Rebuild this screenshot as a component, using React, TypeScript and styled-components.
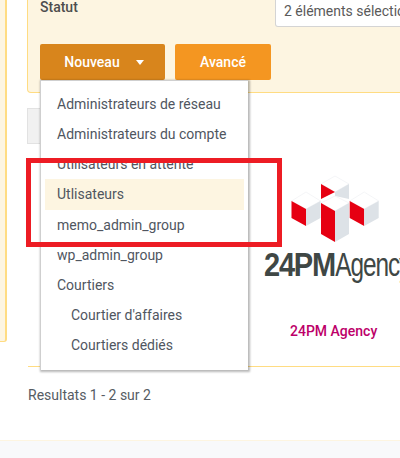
import styled, { createGlobalStyle } from "styled-components";

const GlobalStyle = createGlobalStyle`
  html, body {
    margin: 0;
    padding: 0;
    background: #ffffff;
  }
  body {
    font-family: Roboto, "Liberation Sans", sans-serif;
    color: #555b63;
  }
`;

const Page = styled.div`
  position: relative;
  width: 400px;
  height: 458px;
  overflow: hidden;
  display: grid;
  grid-template-columns: 7px 1fr;
  grid-template-rows: 440px 18px;
`;

const SideStrip = styled.div`
  height: 342px;
  box-sizing: border-box;
  background: #fdf5e1;
  border-right: 2px solid #ffdc82;
  border-bottom: 1px solid #ffdc82;
  border-bottom-right-radius: 3px;
`;

const Main = styled.main`
  padding-left: 20px;
  min-width: 0;
`;

const FilterPanel = styled.section`
  box-sizing: border-box;
  width: 400px;
  height: 93px;
  padding: 0 0 0 12px;
  background: #fdf5e1;
  border: 1px solid #ffdc82;
  border-top: none;
  border-bottom-left-radius: 4px;
`;

const FieldRow = styled.div`
  display: grid;
  grid-template-columns: 235px 1fr;
  height: 44px;
`;

const FieldLabel = styled.label`
  font-size: 14px;
  line-height: 14px;
  font-weight: 500;
  color: #4d4d4d;
`;

const SelectBox = styled.div`
  box-sizing: border-box;
  height: 27px;
  padding: 1px 0 0 8px;
  background: #ffffff;
  border: 1px solid #d4d4d4;
  border-top: none;
  border-radius: 0 0 3px 3px;
  font-size: 14px;
  line-height: 20px;
  white-space: nowrap;
  color: #5a5a5a;
`;

const Actions = styled.div`
  position: relative;
  display: flex;
  gap: 10px;
`;

const ActionButton = styled.button<{ $bg: string; $width: number; $shift?: number }>`
  display: flex;
  align-items: center;
  justify-content: center;
  gap: 16px;
  box-sizing: border-box;
  width: ${(p) => p.$width}px;
  height: 36px;
  padding: 0 0 0 ${(p) => p.$shift ?? 0}px;
  border: none;
  border-radius: 2px;
  background: ${(p) => p.$bg};
  color: #ffffff;
  font-family: inherit;
  font-size: 14px;
  font-weight: 500;
`;

const Caret = styled.span`
  width: 0;
  height: 0;
  border-left: 4.5px solid transparent;
  border-right: 4.5px solid transparent;
  border-top: 5px solid #ffffff;
`;

const Menu = styled.ul`
  position: absolute;
  top: 36px;
  left: 0;
  box-sizing: border-box;
  width: 208px;
  height: 290px;
  margin: 0;
  padding: 8px 4px;
  list-style: none;
  background: #ffffff;
  border: 1px solid #cfcfcf;
  border-right: none;
  border-bottom: none;
  box-shadow: 1px 1px 2px 1px rgba(0, 0, 0, 0.28);
`;

const MenuItem = styled.li<{ $active?: boolean; $nested?: boolean }>`
  height: 30.13px;
  padding-left: ${(p) => (p.$nested ? 26 : 12)}px;
  font-size: 14px;
  line-height: 30px;
  white-space: nowrap;
  color: #50565f;
  background: ${(p) => (p.$active ? "#fdf5e1" : "transparent")};
`;

const Gallery = styled.div`
  box-sizing: border-box;
  width: 372px;
  height: 274px;
  margin-left: 1px;
  display: flex;
  align-items: flex-start;
  border-bottom: 1px solid #ffdc82;
  padding-top: 15px;
`;

const GreyTile = styled.div`
  box-sizing: border-box;
  width: 60px;
  height: 36px;
  margin-left: -1px;
  background: #f1f1f1;
  border: 1px solid #e2e2e2;
`;

const AgencyCard = styled.div`
  margin-left: 176px;
  padding-top: 67px;
  width: 137px;
  display: flex;
  flex-direction: column;
`;

const LogoMark = styled.svg`
  display: block;
  margin-left: 22px;
  width: 100px;
  height: 70px;
`;

const LogoWord = styled.div`
  margin: 2px 0 0 1px;
  height: 36px;
  line-height: 36px;
  font-size: 33px;
  white-space: nowrap;
  letter-spacing: -1.4px;
  color: #3f4745;
  font-family: "Liberation Sans", sans-serif;
  transform: scaleX(0.88);
  transform-origin: left center;
`;

const LogoStrong = styled.strong`
  font-weight: 700;
`;

const LogoThin = styled.span`
  display: inline-block;
  transform: scaleX(0.84);
  transform-origin: left center;
`;

const AgencyName = styled.a`
  margin: 40px 0 0 27px;
  font-size: 14px;
  line-height: 16px;
  font-weight: 500;
  white-space: nowrap;
  color: #bd0069;
`;

const ResultCount = styled.p`
  margin: 19px 0 0 1px;
  font-size: 14px;
  line-height: 18px;
  color: #565c63;
`;

const Footer = styled.footer`
  grid-column: 1 / -1;
  background: #f8f9fb;
  border-top: 1px solid #fdf5e1;
`;

const Annotation = styled.div`
  position: absolute;
  left: 26px;
  top: 158px;
  width: 256px;
  height: 89px;
  box-sizing: border-box;
  border: 5px solid #ed1c24;
`;

const menuItems = [
  { label: "Administrateurs de réseau" },
  { label: "Administrateurs du compte" },
  { label: "Utilisateurs en attente" },
  { label: "Utlisateurs", active: true },
  { label: "memo_admin_group" },
  { label: "wp_admin_group" },
  { label: "Courtiers" },
  { label: "Courtier d'affaires", nested: true },
  { label: "Courtiers dédiés", nested: true },
];

function Cube({ x, y }: { x: number; y: number }) {
  return (
    <g transform={`translate(${x} ${y})`}>
      <polygon points="14.5,0 29,9 14.5,17 0,9" fill="#ffffff" stroke="#eceff1" strokeWidth="0.6" />
      <polygon points="0,9 14.5,17 14.5,34 0,26" fill="#e60012" />
      <polygon points="14.5,17 29,9 29,26 14.5,34" fill="#dde2e7" />
    </g>
  );
}

function AgencyLogo() {
  return (
    <LogoMark viewBox="0 0 100 70">
      <polygon points="50,1 64,9 50,17 36,9" fill="#ffffff" stroke="#eceff1" strokeWidth="0.6" />
      <polygon points="36,9 50,17 36,24" fill="#e60012" />
      <polygon points="50,17 64,9 64,24 50,21" fill="#dde2e7" />
      <Cube x={6.5} y={17} />
      <Cube x={64.7} y={17} />
      <polygon points="50,21 64,28 50,36 36,28" fill="#ffffff" stroke="#eceff1" strokeWidth="0.6" />
      <polygon points="36,28 50,36 50,67 36,59" fill="#e60012" />
      <polygon points="50,36 64,28 64,59 50,67" fill="#dde2e7" />
    </LogoMark>
  );
}

export default function App() {
  return (
    <Page>
      <GlobalStyle />
      <SideStrip />
      <Main>
        <FilterPanel>
          <FieldRow>
            <FieldLabel>Statut</FieldLabel>
            <SelectBox>2 éléments sélectionnés</SelectBox>
          </FieldRow>
          <Actions>
            <ActionButton $bg="#d8851c" $width={125} $shift={3}>
              Nouveau
              <Caret />
            </ActionButton>
            <ActionButton $bg="#f49621" $width={96}>
              Avancé
            </ActionButton>
            <Menu>
              {menuItems.map((item) => (
                <MenuItem key={item.label} $active={item.active} $nested={item.nested}>
                  {item.label}
                </MenuItem>
              ))}
            </Menu>
          </Actions>
        </FilterPanel>
        <Gallery>
          <GreyTile />
          <AgencyCard>
            <AgencyLogo />
            <LogoWord>
              <LogoStrong>24PM</LogoStrong>
              <LogoThin>Agency</LogoThin>
            </LogoWord>
            <AgencyName>24PM Agency</AgencyName>
          </AgencyCard>
        </Gallery>
        <ResultCount>Resultats 1 - 2 sur 2</ResultCount>
      </Main>
      <Footer />
      <Annotation />
    </Page>
  );
}
